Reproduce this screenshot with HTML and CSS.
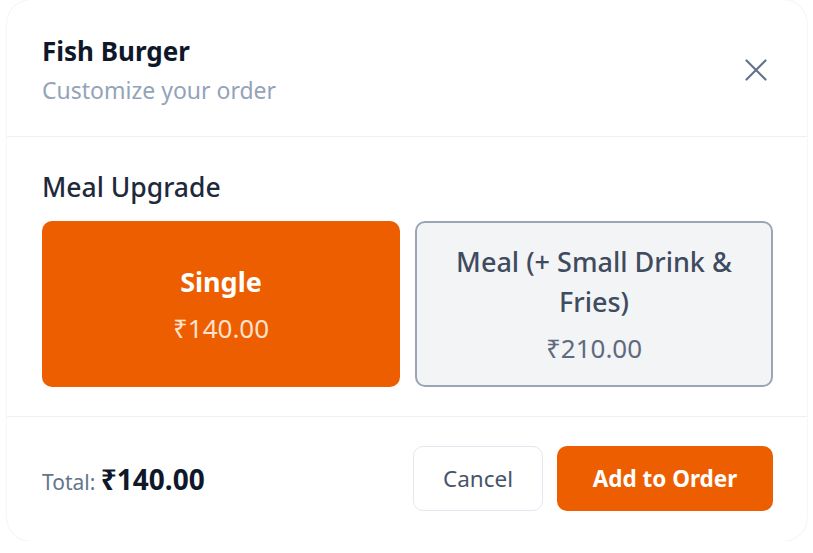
FILE: index.html
```html
<!DOCTYPE html>
<html lang="en">
<head>
    <meta charset="UTF-8">
    <meta name="viewport" content="width=device-width, initial-scale=1.0">
    <title>Fish Burger - Customize</title>
    <link rel="stylesheet" href="styles.css">
</head>
<body>
    <div class="modal">
        <header class="modal-header">
            <div class="title-block">
                <h1>Fish Burger</h1>
                <p>Customize your order</p>
            </div>
            <button class="close-btn" aria-label="Close">
                <svg width="22" height="22" viewBox="0 0 22 22" fill="none" stroke="currentColor" stroke-width="2.2" stroke-linecap="round">
                    <line x1="1.5" y1="1.5" x2="20.5" y2="20.5"/>
                    <line x1="20.5" y1="1.5" x2="1.5" y2="20.5"/>
                </svg>
            </button>
        </header>

        <section class="modal-body">
            <h2>Meal Upgrade</h2>
            <div class="options">
                <button class="option selected">
                    <span class="option-name">Single</span>
                    <span class="option-price">₹140.00</span>
                </button>
                <button class="option">
                    <span class="option-name">Meal (+ Small Drink &amp; Fries)</span>
                    <span class="option-price">₹210.00</span>
                </button>
            </div>
        </section>

        <footer class="modal-footer">
            <div class="total">Total: <strong>₹140.00</strong></div>
            <div class="actions">
                <button class="btn-cancel">Cancel</button>
                <button class="btn-add">Add to Order</button>
            </div>
        </footer>
    </div>
</body>
</html>
```

FILE: styles.css
```css
body {
    font-family: "Noto Sans", "Open Sans", sans-serif;
    background-color: #fff;
    margin: 0;
    padding: 0;
}

.modal {
    width: 800px;
    height: 541px;
    margin: 0 auto 0 7px;
    background-color: #fff;
    border-radius: 24px;
    box-shadow: 0 0 2px rgba(0, 0, 0, 0.12);
    display: flex;
    flex-direction: column;
}

.modal-header {
    display: flex;
    justify-content: space-between;
    align-items: center;
    padding: 32px 40px 26px 35px;
    border-bottom: 1px solid #eef0f3;
}

.title-block h1 {
    margin: 0;
    font-size: 26px;
    line-height: 38px;
    font-weight: 700;
    color: #0f172a;
}

.title-block p {
    margin: 0;
    font-size: 23px;
    line-height: 40px;
    color: #94a3b8;
}

.close-btn {
    background: none;
    border: none;
    padding: 0;
    color: #64748b;
    cursor: pointer;
    display: flex;
    margin-top: -3px;
}

.modal-body {
    padding: 32px 34px 29px 35px;
    border-bottom: 1px solid #eef0f3;
}

.modal-body h2 {
    margin: 0 0 16px;
    font-size: 26.5px;
    line-height: 36px;
    font-weight: 500;
    color: #1e293b;
}

.options {
    display: grid;
    grid-template-columns: 1fr 1fr;
    gap: 15px;
}

.option {
    height: 166px;
    border-radius: 10px;
    border: 2px solid #9aa5b5;
    background-color: #f3f4f6;
    font-family: inherit;
    display: flex;
    flex-direction: column;
    align-items: center;
    justify-content: center;
    padding: 0 32px;
    cursor: pointer;
}

.option-name {
    font-size: 27px;
    line-height: 40px;
    font-weight: 500;
    color: #3f4b5e;
}

.option-price {
    margin-top: 8px;
    font-size: 26px;
    line-height: 36px;
    color: #5f6b7d;
}

.option.selected {
    background-color: #ed5e00;
    border-color: #ed5e00;
}

.option.selected .option-name {
    color: #fff;
    font-weight: 700;
}

.option.selected .option-price {
    color: #ffe1cc;
}

.modal-footer {
    display: flex;
    justify-content: space-between;
    align-items: center;
    padding: 29px 34px 29px 35px;
}

.total {
    font-size: 21px;
    color: #64748b;
}

.total strong {
    font-size: 28px;
    color: #0f172a;
}

.actions {
    display: flex;
    gap: 14px;
}

.actions button {
    height: 65px;
    border-radius: 10px;
    font-family: inherit;
    font-size: 22.5px;
    cursor: pointer;
}

.btn-cancel {
    width: 130px;
    background-color: #fff;
    border: 1.5px solid #e2e8f0;
    color: #475569;
}

.btn-add {
    width: 216px;
    background-color: #ed5e00;
    border: none;
    color: #fff;
    font-weight: 700;
}
```
